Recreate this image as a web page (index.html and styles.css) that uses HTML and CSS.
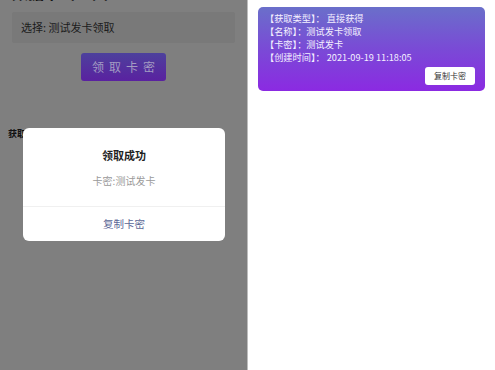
FILE: index.html
```html
<!DOCTYPE html>
<html lang="zh">
<head>
<meta charset="utf-8">
<link rel="stylesheet" href="styles.css">
</head>
<body>
<div class="app">
  <section class="left">
    <h1 class="title">数据卡密工具</h1>
    <div class="select">选择: 测试发卡领取</div>
    <div class="btn-wrap"><div class="get-btn">领取卡密</div></div>
    <div class="get-label">获取记录</div>
    <div class="modal">
      <div class="modal-title">领取成功</div>
      <div class="modal-msg">卡密:测试发卡</div>
      <div class="modal-action">复制卡密</div>
    </div>
  </section>
  <section class="right">
    <div class="card">
      <div class="line">【获取类型】： 直接获得</div>
      <div class="line">【名称】：测试发卡领取</div>
      <div class="line">【卡密】：测试发卡</div>
      <div class="line">【创建时间】： 2021-09-19 11:18:05</div>
      <div class="card-foot"><span class="copy-btn">复制卡密</span></div>
    </div>
  </section>
</div>
</body>
</html>
```

FILE: styles.css
```css
* { box-sizing: border-box; }
html, body { margin: 0; padding: 0; }
body {
  font-family: "Noto Sans CJK SC", "Noto Sans", sans-serif;
  width: 495px;
  height: 370px;
  overflow: hidden;
}
.app {
  display: flex;
  height: 370px;
}
.left {
  position: relative;
  width: 248px;
  height: 370px;
  background: #7f7f7f;
  border-right: 1px solid #bdbdbd;
  overflow: hidden;
}
.title {
  margin: -18px 0 0 12px;
  font-size: 16px;
  line-height: 20px;
  font-weight: 700;
  color: #141414;
}
.select {
  margin: 10px 12px 0 12px;
  height: 31px;
  background: #797979;
  border-radius: 2px;
  padding-left: 9px;
  font-size: 11px;
  line-height: 31px;
  color: #1c1c1c;
}
.btn-wrap {
  display: flex;
  justify-content: center;
  margin-top: 10px;
}
.get-btn {
  width: 85px;
  height: 28px;
  border-radius: 3px;
  background: linear-gradient(180deg, #4d419c 0%, #5a21a0 100%);
  color: #a39bc2;
  font-size: 12px;
  line-height: 28px;
  text-align: center;
  letter-spacing: 5px;
  padding-left: 5px;
}
.get-label {
  margin: 47px 0 0 8px;
  font-size: 9px;
  font-weight: 700;
  line-height: 12px;
  color: #111;
}
.modal {
  position: absolute;
  left: 23px;
  top: 128px;
  width: 202px;
  height: 113px;
  background: #fff;
  border-radius: 6px;
  display: flex;
  flex-direction: column;
  align-items: center;
}
.modal-title {
  margin-top: 19px;
  font-size: 11px;
  font-weight: 700;
  line-height: 16px;
  color: #222;
}
.modal-msg {
  margin-top: 11px;
  font-size: 10px;
  line-height: 14px;
  color: #9a9a9a;
}
.modal-action {
  margin-top: 18px;
  width: 100%;
  border-top: 1px solid #f0f0f0;
  text-align: center;
  font-size: 10.5px;
  line-height: 34px;
  color: #5b6796;
}
.right {
  flex: 1;
  background: #fff;
  padding: 7px 10px 0 10px;
  display: flex;
  flex-direction: column;
}
.card {
  height: 84px;
  border-radius: 5px;
  background: linear-gradient(180deg, #6a6fca 0%, #7a4ad6 50%, #8b2ae2 100%);
  padding: 5px 10px 0 7px;
  color: #f4f0ff;
  font-size: 9.2px;
  line-height: 13px;
}
.card-foot {
  display: flex;
  justify-content: flex-end;
  margin-top: 3px;
}
.copy-btn {
  display: inline-block;
  width: 50px;
  height: 18px;
  background: #fff;
  border-radius: 3px;
  color: #333;
  font-size: 8px;
  line-height: 18px;
  text-align: center;
}
```
